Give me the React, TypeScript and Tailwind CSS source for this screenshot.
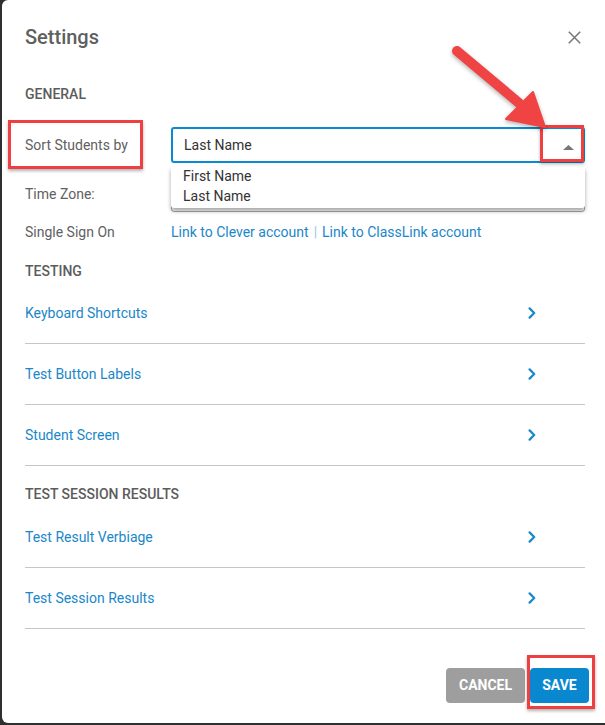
import React from 'react';

const TESTING = ['Keyboard Shortcuts', 'Test Button Labels', 'Student Screen'];
const RESULTS = ['Test Result Verbiage', 'Test Session Results'];

function Chevron() {
  return (
    <svg width="8" height="12" viewBox="0 0 8 12" fill="none">
      <path d="M1.6 1.4L6.2 6L1.6 10.6" stroke="#1a87c9" strokeWidth="2.2" strokeLinecap="round" strokeLinejoin="round" />
    </svg>
  );
}

function LinkRow({ label }: { label: string }) {
  return (
    <div className="h-[61px] flex items-center justify-between pr-[49px] border-b border-[#c6c6c6]">
      <span className="text-[14px] text-[#1a87c9]">{label}</span>
      <Chevron />
    </div>
  );
}

function SectionTitle({ children, className }: { children: React.ReactNode; className?: string }) {
  return (
    <p className={`text-[14px] leading-[20px] font-medium uppercase text-[#5c5c5c] ${className ?? ''}`}>
      {children}
    </p>
  );
}

export default function App() {
  return (
    <div
      className="relative w-[605px] h-[725px] bg-[#2f2f2f] pl-[2px] pb-[2px] flex overflow-hidden"
      style={{ fontFamily: 'Roboto, "Liberation Sans", sans-serif' }}
    >
      <div className="flex-1 bg-white rounded-l-[6px] flex flex-col pl-[23px] pr-[18px]">
        {/* Header */}
        <div className="h-[74px] flex items-center justify-between">
          <h1 className="text-[20px] leading-none font-medium text-[#5f5f5f]">Settings</h1>
          <svg width="13" height="13" viewBox="0 0 13 13" className="mr-[6px]">
            <path d="M0.8 0.8L12.2 12.2M12.2 0.8L0.8 12.2" stroke="#7a7a7a" strokeWidth="1.6" />
          </svg>
        </div>

        <SectionTitle className="mt-[10px]">General</SectionTitle>

        {/* Sort students */}
        <div className="mt-[23px] flex items-center pr-[2px]">
          <span className="w-[146px] text-[14px] text-[#616161]">Sort Students by</span>
          <div className="relative flex-1">
            <div className="h-[36px] border-2 border-[#0a8bd1] rounded-[3px] pl-[11px] pr-[9px] flex items-center justify-between">
              <span className="text-[14px] text-[#333]">Last Name</span>
              <svg width="11" height="5" viewBox="0 0 11 5" className="mt-[4px]">
                <path d="M0 5L5.5 0L11 5Z" fill="#777" />
              </svg>
            </div>
            <div className="absolute z-10 left-0 right-0 top-[40px] h-[41px] bg-white rounded-b-[3px] shadow-[0_3px_4px_rgba(0,0,0,0.35)] px-[12px] text-[14px] leading-[20px] text-[#333]">
              <p className="-mt-[1px]">First Name</p>
              <p>Last Name</p>
            </div>
          </div>
        </div>

        {/* Time zone */}
        <div className="mt-[13px] flex items-center pr-[2px]">
          <span className="w-[146px] text-[14px] text-[#616161]">Time Zone:</span>
          <div className="flex-1 h-[36px] border border-[#a8a8a8] rounded-[3px]" />
        </div>

        {/* SSO */}
        <div className="mt-[10px] h-[20px] flex items-center text-[14px]">
          <span className="w-[146px] text-[#616161]">Single Sign On</span>
          <span className="text-[#1a87c9]">Link to Clever account</span>
          <span className="mx-[5px] text-[#9cc8e4]">|</span>
          <span className="text-[#1a87c9]">Link to ClassLink account</span>
        </div>

        <SectionTitle className="mt-[19px]">Testing</SectionTitle>
        <div className="mt-[2px] pr-[2px]">
          {TESTING.map(l => <LinkRow key={l} label={l} />)}
        </div>

        <SectionTitle className="mt-[18px]">Test Session Results</SectionTitle>
        <div className="mt-[3px] pr-[2px]">
          {RESULTS.map(l => <LinkRow key={l} label={l} />)}
        </div>

        {/* Footer */}
        <div className="mt-[39px] flex justify-end gap-[5px] -mr-[2px]">
          <button className="w-[79px] h-[35px] rounded-[4px] bg-[#9e9e9e] text-white text-[14px] font-bold">CANCEL</button>
          <button className="w-[59px] h-[35px] rounded-[4px] bg-[#0a88cf] text-white text-[14px] font-bold">SAVE</button>
        </div>
      </div>

      {/* Annotations */}
      <div className="absolute left-[8px] top-[120px] w-[135px] h-[49px] border-[3px] border-[#ee4040] shadow-[0_2px_3px_rgba(0,0,0,0.3)]" />
      <div className="absolute left-[540px] top-[125px] w-[44px] h-[37px] border-[3px] border-[#ee4040] shadow-[0_2px_3px_rgba(0,0,0,0.3)]" />
      <div className="absolute left-[527px] top-[655px] w-[68px] h-[54px] border-[3px] border-[#ee4040] shadow-[0_2px_3px_rgba(0,0,0,0.3)]" />
      <svg
        className="absolute left-0 top-0 pointer-events-none drop-shadow-[0_2px_2px_rgba(0,0,0,0.3)]"
        width="605"
        height="725"
        viewBox="0 0 605 725"
      >
        <path d="M457 51L519 103" stroke="#f04444" strokeWidth="10" strokeLinecap="round" />
        <path d="M506 119L533 92L545 127Z" fill="#f04444" stroke="#f04444" strokeWidth="2" strokeLinejoin="round" />
      </svg>
    </div>
  );
}
